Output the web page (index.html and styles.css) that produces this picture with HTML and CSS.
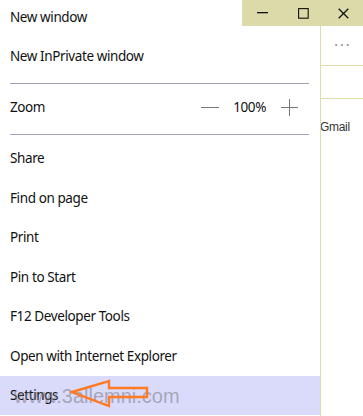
FILE: index.html
```html
<!DOCTYPE html>
<html>
<head>
<meta charset="utf-8">
<link rel="stylesheet" href="styles.css">
</head>
<body>
<div class="page">
  <div class="menu">
    <div class="item">New window</div>
    <div class="item">New InPrivate window</div>
    <div class="sep"></div>
    <div class="item zoom">
      <span>Zoom</span>
      <div class="zoom-ctrl">
        <span class="minus"></span>
        <span class="pct">100%</span>
        <span class="plus"></span>
      </div>
    </div>
    <div class="sep"></div>
    <div class="item">Share</div>
    <div class="item">Find on page</div>
    <div class="item">Print</div>
    <div class="item">Pin to Start</div>
    <div class="item">F12 Developer Tools</div>
    <div class="item">Open with Internet Explorer</div>
    <div class="item active">
      <span>Settings</span>
      <span class="watermark">www.3allemni.com</span>
      <svg class="arrow" width="80" height="30" viewBox="0 0 80 30">
        <polygon points="3,13 40,2 40,9 78,9 78,18 40,18 40,27" fill="none" stroke="#ff7a22" stroke-width="2.4" stroke-linejoin="miter"/>
      </svg>
    </div>
  </div>
  <div class="side">
    <div class="side-row dots">&middot;&middot;&middot;</div>
    <div class="side-row"></div>
    <div class="gmail">Gmail</div>
  </div>
  <div class="titlebar">
    <svg width="12" height="2" viewBox="0 0 12 2"><rect x="0" y="0" width="11" height="1.3" fill="#111"/></svg>
    <svg width="11" height="11" viewBox="0 0 11 11"><rect x="0.6" y="0.6" width="9.6" height="9.6" fill="none" stroke="#111" stroke-width="1.1"/></svg>
    <svg width="11" height="11" viewBox="0 0 11 11"><path d="M0.7 0.7 L10.3 10.3 M10.3 0.7 L0.7 10.3" stroke="#111" stroke-width="1.3"/></svg>
  </div>
</div>
</body>
</html>
```
FILE: styles.css
```css
html, body {
  margin: 0;
  padding: 0;
  background: #ffffff;
}
body {
  font-family: "Noto Sans", "Open Sans", sans-serif;
  color: #111;
  overflow: hidden;
}
.page {
  position: relative;
  width: 363px;
  height: 416px;
  display: grid;
  grid-template-columns: 320px 1px 42px;
  overflow: hidden;
}
.menu {
  margin-top: -3px;
  display: flex;
  flex-direction: column;
}
.item {
  height: 39.5px;
  flex: none;
  display: flex;
  align-items: center;
  padding-left: 10px;
  font-size: 13.5px;
  letter-spacing: -0.4px;
  position: relative;
}
.sep {
  flex: none;
  height: 11.5px;
  box-sizing: border-box;
  padding-top: 6.5px;
  margin: 0 11px 0 10px;
}
.sep::before {
  content: "";
  display: block;
  height: 1px;
  background: #a3a2bb;
}
.zoom {
  justify-content: space-between;
  padding-right: 22px;
}
.zoom-ctrl {
  display: flex;
  align-items: center;
}
.minus {
  width: 18px;
  height: 1px;
  background: #777;
  margin-right: 14px;
}
.pct {
  font-size: 13.5px;
}
.plus {
  position: relative;
  width: 17px;
  height: 17px;
  margin-left: 15px;
}
.plus::before, .plus::after {
  content: "";
  position: absolute;
  background: #777;
}
.plus::before {
  left: 0;
  right: 0;
  top: 8px;
  height: 1px;
}
.plus::after {
  top: 0;
  bottom: 0;
  left: 8px;
  width: 1px;
}
.active {
  background: #dadafa;
}
.watermark {
  position: absolute;
  left: 14px;
  top: 9px;
  font-family: "Liberation Sans", Arial, sans-serif;
  font-size: 20px;
  letter-spacing: 0;
  color: rgba(120, 120, 130, 0.55);
}
.arrow {
  position: absolute;
  left: 69px;
  top: 3px;
}
.side {
  grid-column: 3;
  display: flex;
  flex-direction: column;
  padding-top: 26px;
}
.page::after {
  content: "";
  position: absolute;
  left: 320px;
  top: 26px;
  bottom: 0;
  width: 1px;
  background: #dedcaa;
}
.side-row {
  height: 40px;
  border-bottom: 1px solid #dedcaa;
  box-sizing: border-box;
}
.side-row + .side-row {
  height: 33px;
}
.dots {
  display: flex;
  align-items: center;
  justify-content: center;
  color: #888;
  font-size: 14px;
  letter-spacing: 2px;
  padding-left: 2px;
  padding-bottom: 2px;
}
.gmail {
  margin-top: 21px;
  margin-left: -1px;
  font-family: "Liberation Sans", Arial, sans-serif;
  font-size: 12px;
  color: #333;
  letter-spacing: -0.3px;
}
.titlebar {
  position: absolute;
  left: 242px;
  top: 0;
  width: 121px;
  height: 26px;
  background: #dcdaa9;
  display: grid;
  grid-template-columns: 41px 41px 39px;
  align-items: center;
  justify-items: center;
}
```
